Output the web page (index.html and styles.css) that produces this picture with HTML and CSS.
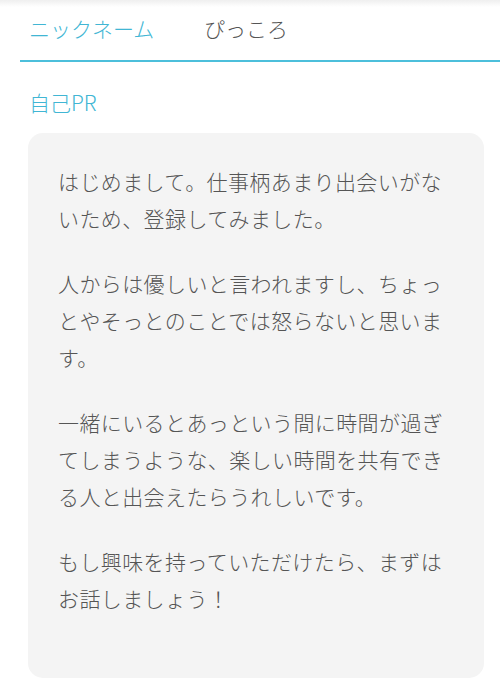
FILE: index.html
```html
<!DOCTYPE html>
<html lang="ja">
<head>
<meta charset="utf-8">
<title>プロフィール</title>
<link rel="stylesheet" href="styles.css">
</head>
<body>
  <div class="page">
    <div class="nick-row">
      <span class="nick-label">ニックネーム</span>
      <span class="nick-value">ぴっころ</span>
    </div>

    <section class="pr">
      <h2 class="pr-title">自己PR</h2>
      <div class="pr-box">
        <p>はじめまして。仕事柄あまり出会いがないため、登録してみました。</p>
        <p>人からは優しいと言われますし、ちょっとやそっとのことでは怒らないと思います。</p>
        <p>一緒にいるとあっという間に時間が過ぎてしまうような、楽しい時間を共有できる人と出会えたらうれしいです。</p>
        <p>もし興味を持っていただけたら、まずはお話しましょう！</p>
      </div>
    </section>
  </div>
</body>
</html>
```

FILE: styles.css
```css
html, body {
  margin: 0;
  padding: 0;
  background: #ffffff;
}

body {
  font-family: "Noto Sans CJK JP", "Noto Sans", sans-serif;
  font-weight: 300;
  color: #555555;
  width: 500px;
  height: 689px;
  overflow: hidden;
}

.page {
  background: linear-gradient(to bottom, #efefef 0px, #ffffff 7px) no-repeat;
  min-height: 689px;
}

/* nickname row with the accent underline */
.nick-row {
  display: flex;
  align-items: center;
  height: 56px;
  padding: 0 0 4px 9px;
  margin-left: 20px;
  border-bottom: 2px solid #4cbfdb;
  font-size: 21px;
}

.nick-label {
  width: 175px;
  flex: none;
  color: #41b6d4;
}

.nick-value {
  color: #555555;
}

/* self introduction */
.pr {
  padding: 0 16px 0 28px;
}

.pr-title {
  margin: 0;
  padding: 25px 0 0 1px;
  height: 46px;
  line-height: 30px;
  font-size: 21px;
  font-weight: 300;
  color: #41b6d4;
}

.pr-box {
  margin-top: 0;
  background: #f4f4f4;
  border-radius: 15px;
  padding: 30px 28px 61px 30px;
  font-size: 21px;
  letter-spacing: 0.4px;
  line-height: 37px;
  color: #555555;
}

.pr-box p {
  margin: 0;
}

.pr-box p + p {
  margin-top: 28px;
}
```
